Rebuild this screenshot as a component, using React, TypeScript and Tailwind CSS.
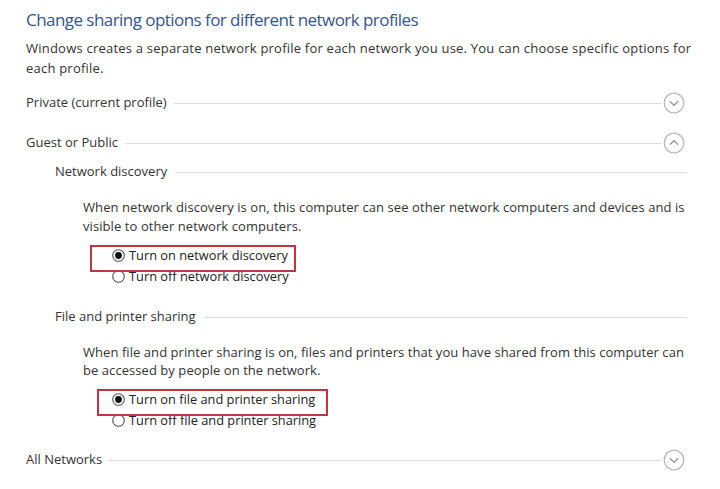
import React from "react";

function Chevron({ up }: { up?: boolean }) {
  return (
    <svg width="22" height="22" viewBox="0 0 22 22" className="shrink-0">
      <circle cx="11" cy="11" r="9.8" fill="none" stroke="#b8b8b8" strokeWidth="1.3" />
      {up ? (
        <path d="M6.8 12.8 L11 8.8 L15.2 12.8" fill="none" stroke="#9a9a9a" strokeWidth="1.4" />
      ) : (
        <path d="M6.8 9.2 L11 13.2 L15.2 9.2" fill="none" stroke="#9a9a9a" strokeWidth="1.4" />
      )}
    </svg>
  );
}

function Radio({ on }: { on?: boolean }) {
  return (
    <svg width="13" height="13" viewBox="0 0 13 13" className="shrink-0">
      <circle cx="6.5" cy="6.5" r="5.8" fill="#fff" stroke="#555" strokeWidth="1.1" />
      {on && <circle cx="6.5" cy="6.5" r="3.4" fill="#111" />}
    </svg>
  );
}

function Header({ label, up }: { label: string; up?: boolean }) {
  return (
    <div className="flex items-center h-[22px]">
      <span className="text-[13px] text-[#333] whitespace-nowrap">{label}</span>
      <div className="flex-1 h-px bg-[#dcdcdc] ml-[7px] mr-[2px]" />
      <Chevron up={up} />
    </div>
  );
}

function SubHeader({ label }: { label: string }) {
  return (
    <div className="flex items-center h-[20px] pl-[29px] mr-[-2px]">
      <span className="text-[13px] text-[#333] whitespace-nowrap">{label}</span>
      <div className="flex-1 h-px bg-[#dcdcdc] ml-[8px]" />
    </div>
  );
}

function Options({
  on,
  off,
  boxLeft,
  boxWidth,
}: {
  on: string;
  off: string;
  boxLeft: number;
  boxWidth: number;
}) {
  return (
    <div className="relative pl-[86px]">
      <div className="flex items-center gap-[4px] h-[21px]">
        <Radio on />
        <span className="text-[12.8px] text-[#222] whitespace-nowrap">{on}</span>
      </div>
      <div className="flex items-center gap-[4px] h-[21px]">
        <Radio />
        <span className="text-[12.8px] text-[#222] whitespace-nowrap">{off}</span>
      </div>
      <div
        className="absolute top-[0px] h-[27px] border-2 border-[#c23440]"
        style={{ left: boxLeft, width: boxWidth }}
      />
    </div>
  );
}

export default function App() {
  return (
    <div
      className="w-[720px] h-[489px] bg-white pl-[26px] pr-[35px] pt-[8px] overflow-hidden"
      style={{ fontFamily: '"Open Sans", "Noto Sans", sans-serif' }}
    >
      <div className="text-[17px] leading-[24px] text-[#35558d] tracking-[-0.55px] whitespace-nowrap">
        Change sharing options for different network profiles
      </div>
      <div className="mt-[6px] text-[13px] leading-[20px] text-[#333] tracking-[0.22px] whitespace-nowrap">
        Windows creates a separate network profile for each network you use. You can choose specific options for
        <br />
        each profile.
      </div>

      <div className="mt-[14px]">
        <Header label="Private (current profile)" />
      </div>
      <div className="mt-[18px]">
        <Header label="Guest or Public" up />
      </div>

      <div className="mt-[8px]">
        <SubHeader label="Network discovery" />
      </div>
      <div className="mt-[16px] pl-[57px] text-[13px] leading-[19px] text-[#333] tracking-[0.08px] whitespace-nowrap">
        When network discovery is on, this computer can see other network computers and devices and is
        <br />
        visible to other network computers.
      </div>
      <div className="mt-[9px]">
        <Options
          on="Turn on network discovery"
          off="Turn off network discovery"
          boxLeft={64}
          boxWidth={206}
        />
      </div>

      <div className="mt-[20px]">
        <SubHeader label="File and printer sharing" />
      </div>
      <div className="mt-[16px] pl-[57px] text-[13px] leading-[18px] text-[#333] tracking-[0.06px] whitespace-nowrap">
        When file and printer sharing is on, files and printers that you have shared from this computer can
        <br />
        be accessed by people on the network.
      </div>
      <div className="mt-[10px]">
        <Options
          on="Turn on file and printer sharing"
          off="Turn off file and printer sharing"
          boxLeft={71}
          boxWidth={231}
        />
      </div>

      <div className="mt-[18px]">
        <Header label="All Networks" />
      </div>
    </div>
  );
}
